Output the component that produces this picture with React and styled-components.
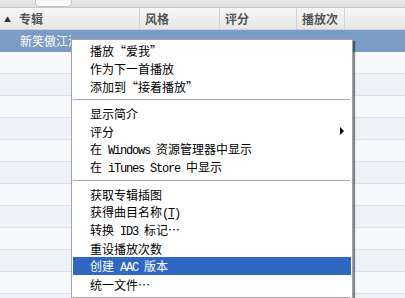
import React from 'react';
import styled, { createGlobalStyle } from 'styled-components';

const GlobalStyle = createGlobalStyle`
  html, body {
    margin: 0;
    padding: 0;
    background: #ffffff;
  }
  body {
    width: 405px;
    height: 298px;
    overflow: hidden;
    font-family: "Liberation Sans", "Noto Sans CJK SC", sans-serif;
  }
`;

const columns = [
  { label: '专辑', width: 140, sort: true },
  { label: '风格', width: 80 },
  { label: '评分', width: 77 },
  { label: '播放次', width: 48 },
  { label: '', width: 60 },
];

const menuItems = [
  { text: ['播放“爱我”'] },
  { text: ['作为下一首播放'] },
  { text: ['添加到“接着播放”'] },
  { sep: true },
  { text: ['显示简介'] },
  { text: ['评分'], sub: true },
  { text: ['在', { latin: ' Windows ' }, '资源管理器中显示'] },
  { text: ['在', { latin: ' iTunes Store ' }, '中显示'] },
  { sep: true },
  { text: ['获取专辑插图'] },
  { text: ['获得曲目名称', { latin: '(', key: 'T' }] },
  { text: ['转换', { latin: ' ID3 ' }, '标记…'] },
  { text: ['重设播放次数'] },
  { text: ['创建', { latin: ' AAC ' }, '版本'], active: true },
  { text: ['统一文件…'] },
  { sep: true },
];

const App = () => {
  const rows = Array.from({ length: 12 });

  return (
    <Page>
      <GlobalStyle />
      <TopStrip>
        <TopButton />
      </TopStrip>

      <Header>
        {columns.map((c, i) => (
          <HeaderCell key={i} $w={c.width} $first={i === 0}>
            {c.sort && <SortArrow>▲</SortArrow>}
            {c.label}
          </HeaderCell>
        ))}
      </Header>

      <Rows>
        <Row $selected>
          <SelectedText>新笑傲江湖</SelectedText>
        </Row>
        {rows.map((_, i) => (
          <Row key={i} $odd={i % 2 === 1} />
        ))}
      </Rows>

      <Menu>
        {menuItems.map((item, i) =>
          item.sep ? (
            <Separator key={i} />
          ) : (
            <Item key={i} $active={item.active}>
              <span>
                {item.text.map((part, j) => {
                  if (typeof part === 'string') return part;
                  if (part.key) {
                    return (
                      <Latin key={j}>
                        (<u>{part.key}</u>)
                      </Latin>
                    );
                  }
                  return <Latin key={j}>{part.latin}</Latin>;
                })}
              </span>
              {item.sub && <SubArrow />}
            </Item>
          )
        )}
      </Menu>
    </Page>
  );
};

const Page = styled.div`
  position: relative;
  width: 405px;
  height: 298px;
  overflow: hidden;
  background: #f5f7fa;
`;

const TopStrip = styled.div`
  height: 8px;
  background: linear-gradient(#e9e9e9, #dcdcdc);
  border-bottom: 1px solid #c9c9c9;
  box-sizing: border-box;
  padding-left: 35px;
`;

const TopButton = styled.div`
  width: 37px;
  height: 7px;
  background: linear-gradient(#f4f4f4, #ffffff);
  border: 1px solid #c4c4c4;
  border-top: none;
  border-radius: 0 0 5px 5px;
  box-sizing: border-box;
`;

const Header = styled.div`
  display: flex;
  height: 22px;
  background: linear-gradient(#f7f7f7, #e6e6e6);
  border-bottom: 1px solid #d0d0d0;
  box-sizing: border-box;
`;

const HeaderCell = styled.div`
  display: flex;
  align-items: center;
  flex: 0 0 ${p => p.$w}px;
  box-sizing: border-box;
  padding-left: ${p => (p.$first ? 4 : 5)}px;
  border-right: 1px solid #d2d2d2;
  font-family: "Noto Sans CJK SC", sans-serif;
  font-size: 12px;
  font-weight: 700;
  color: #555555;
  &:last-child {
    border-right: none;
  }
`;

const SortArrow = styled.span`
  font-size: 7px;
  color: #333;
  margin-right: 8px;
`;

const Rows = styled.div`
  display: flex;
  flex-direction: column;
`;

const Row = styled.div`
  height: 22px;
  box-sizing: border-box;
  display: flex;
  align-items: center;
  padding-left: 20px;
  background: ${p => (p.$selected ? '#7b9cc6' : p.$odd ? '#eef1f6' : '#f8f9fc')};
  border-bottom: 1px solid ${p => (p.$selected ? '#7b9cc6' : '#dde2ea')};
`;

const SelectedText = styled.span`
  width: 51px;
  overflow: hidden;
  white-space: nowrap;
  font-family: "Noto Sans CJK SC", sans-serif;
  font-size: 12px;
  color: #ffffff;
`;

const Menu = styled.div`
  position: absolute;
  left: 71px;
  top: 39px;
  width: 282px;
  box-sizing: border-box;
  padding: 1px;
  background: #ffffff;
  border: 1px solid #a3a3a3;
  box-shadow: 2px 2px 1px rgba(0, 0, 0, 0.45);
  font-family: "Noto Sans CJK SC", sans-serif;
  font-size: 12px;
  color: #000000;
`;

const Item = styled.div`
  display: flex;
  align-items: center;
  height: 18px;
  padding: 0 7px 0 17px;
  white-space: pre;
  background: ${p => (p.$active ? '#3167c4' : 'transparent')};
  color: ${p => (p.$active ? '#ffffff' : '#000000')};
`;

const Latin = styled.span`
  font-family: "Liberation Mono", monospace;
  font-size: 12px;
  letter-spacing: -1.2px;
`;

const SubArrow = styled.span`
  margin-left: auto;
  width: 0;
  height: 0;
  border-left: 4px solid #000;
  border-top: 4px solid transparent;
  border-bottom: 4px solid transparent;
`;

const Separator = styled.div`
  height: 9px;
  display: flex;
  align-items: center;
  &::after {
    content: '';
    flex: 1;
    height: 1px;
    margin-right: 1px;
    background: #a9a9a9;
  }
`;

export default App;
